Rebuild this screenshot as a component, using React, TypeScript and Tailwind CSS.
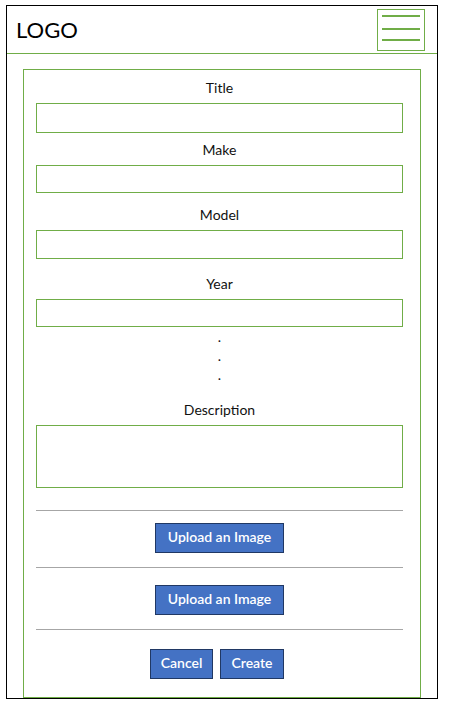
const Label = ({ children, className = "" }: { children: string; className?: string }) => (
  <div className={`text-center text-[14px] leading-[20px] text-[#111] ${className}`}>{children}</div>
);

const Field = ({ className = "" }: { className?: string }) => (
  <div className={`mt-[5px] border border-[#70ad47] ${className}`} />
);

const Btn = ({ children, className = "" }: { children: string; className?: string }) => (
  <button
    type="button"
    className={`h-[30px] border border-[#203864] bg-[#4472c4] pb-[3px] text-[14px] leading-none font-semibold text-white ${className}`}
  >
    {children}
  </button>
);

const Divider = ({ className = "" }: { className?: string }) => (
  <div className={`h-px bg-[#a6a6a6] ${className}`} />
);

export default function App() {
  return (
    <div className="min-h-screen bg-white pl-[6px] pt-[5px] font-['Lato',sans-serif]">
      <div className="flex h-[694px] w-[432px] flex-col overflow-hidden border border-black">
        {/* header */}
        <header className="flex h-[48px] items-center justify-between border-b border-[#70ad47] pl-[9px] pr-[12px]">
          <span className="text-[22px] leading-none text-black">LOGO</span>
          <button
            type="button"
            className="flex h-[42px] w-[48px] flex-col items-center border border-[#70ad47] pt-[5px]"
          >
            <span className="h-[2px] w-[38px] bg-[#70ad47]" />
            <span className="mt-[11px] h-[2px] w-[38px] bg-[#70ad47]" />
            <span className="mt-[9px] h-[2px] w-[38px] bg-[#70ad47]" />
          </button>
        </header>

        {/* form card */}
        <div className="mx-[16px] mt-[15px] flex-1 border border-[#70ad47] pl-[12px] pr-[17px] pt-[8px]">
          <Label>Title</Label>
          <Field className="mt-[3px] h-[30px]" />

          <Label className="mt-[7px]">Make</Label>
          <Field className="h-[28px]" />

          <Label className="mt-[12px]">Model</Label>
          <Field className="h-[29px]" />

          <Label className="mt-[15px]">Year</Label>
          <Field className="h-[28px]" />

          <div className="text-center text-[14px] leading-[19px] text-[#111]">
            <div>.</div>
            <div>.</div>
            <div>.</div>
          </div>

          <Label className="mt-[16px]">Description</Label>
          <Field className="h-[63px]" />

          <Divider className="mt-[22px]" />
          <div className="mt-[12px] flex justify-center">
            <Btn className="w-[129px]">Upload an Image</Btn>
          </div>

          <Divider className="mt-[14px]" />
          <div className="mt-[17px] flex justify-center">
            <Btn className="w-[129px]">Upload an Image</Btn>
          </div>

          <Divider className="mt-[14px]" />
          <div className="mt-[19px] flex justify-center gap-[7px] pr-[5px]">
            <Btn className="w-[63px]">Cancel</Btn>
            <Btn className="w-[64px]">Create</Btn>
          </div>
        </div>
      </div>
    </div>
  );
}
